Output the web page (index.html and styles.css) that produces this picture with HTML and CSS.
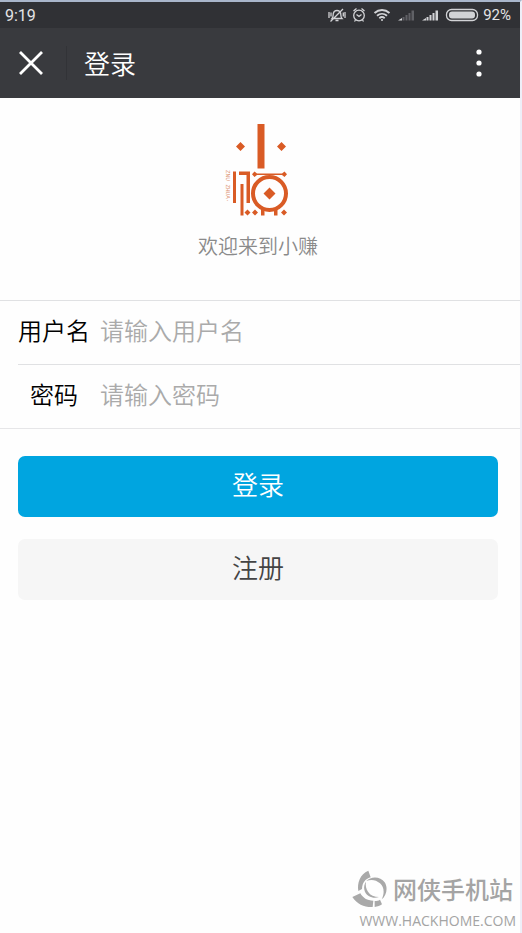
FILE: index.html
```
<!DOCTYPE html>
<html lang="zh-CN">
	<head>
		<meta charset="UTF-8">
		<meta name="viewport" content="width=device-width, initial-scale=1">
		<title>登录</title>
		<link rel="stylesheet" href="styles.css">
	</head>

	<body>
		<div class="page">
			<!-- status bar -->
			<div class="status">
				<span class="clock">9:19</span>
				<svg class="status-icons" width="152" height="18" viewBox="327 6 152 18" fill="none" stroke="#d2d3d6" stroke-width="1.3">
					<!-- muted bell -->
					<path d="M332 18.500c1.500-1.500 1-3 1.300-5 .4-2 1.700-3 3.700-3s3.300 1 3.700 3c.3 2-.2 3.500 1.300 5zM335.500 20.500h3M343 9l-12.500 12.500M329 12v6M345 12v6M331 12.500v4M343.300 12.500v4"/>
					<!-- alarm -->
					<circle cx="359" cy="15.500" r="5.300"/>
					<path d="M353.500 11l3-2.500M361.500 8.500l3 2.500M356.500 14.500l2.500 2 2.500-2M355.500 20l-1 1.500M362.500 20l1 1.500"/>
					<!-- wifi -->
					<path d="M374.500 13c4.500-4 10.500-4 15 0M377 15.800c3-2.600 7-2.600 10 0M379.300 18.200c1.700-1.400 3.700-1.400 5.400 0" stroke-width="1.900"/>
					<circle cx="382" cy="20" r="1" fill="#d2d3d6" stroke="none"/>
					<!-- signal, two cards -->
					<g stroke="none" fill="#606166">
						<path fill="#d2d3d6" d="M398 20.500l4-2.500v2.500z"/>
						<path d="M402.500 17h2v3.500h-2zM405.500 15h2v5.500h-2zM408.500 13h2v7.500h-2zM411.500 10.500h2.500v10h-2.500z"/>
						<path fill="#d2d3d6" d="M422 20.500l4-2.500v2.500zM426.500 17h2v3.500h-2zM429.500 15h2v5.500h-2zM432.500 13h2v7.500h-2zM435.500 10.500h2.500v10h-2.500z"/>
					</g>
					<!-- battery -->
					<rect x="446.500" y="9.500" width="31" height="11" rx="5"/>
					<rect x="449" y="11.500" width="26" height="7" rx="3" fill="#d2d3d6" stroke="none"/>
				</svg>
				<span class="percent">92%</span>
			</div>

			<header class="bar">
				<button type="button" class="icon-btn close" aria-label="关闭">
					<svg width="24" height="24" viewBox="0 0 24 24" stroke="#fff" stroke-width="2.800"><path d="M1 1l22 22M23 1L1 23"/></svg>
				</button>
				<h1 class="title">登录</h1>
				<button type="button" class="icon-btn more" aria-label="更多">
					<svg width="6" height="28" viewBox="0 0 6 28" fill="#fff"><circle cx="3" cy="3" r="2.600"/><circle cx="3" cy="14" r="2.600"/><circle cx="3" cy="25" r="2.600"/></svg>
				</button>
			</header>

			<main>
				<div class="brand">
					<svg class="logo" width="66" height="94" viewBox="224 123 66 94" fill="#d95b25">
						<path d="M257.500 124h7v44.500h-7zM240.500 142l4.500 4.500-4.500 4.500-4.500-4.500zM281.500 142l4.500 4.500-4.500 4.500-4.500-4.500z"/>
						<path d="M233 171.500h3V203h-3zM240.500 184h3v31.500h-3zM239 171.500h11V203h-3.500v-28H239z"/>
						<path d="M254.500 171.500l2.500 2h25l2.500-2 2.500 2.700-2.500 2.700-2.500-2h-25l-2.500 2-2.500-2.700z"/>
						<circle cx="269.500" cy="193.500" r="16.500" fill="none" stroke="#d95b25" stroke-width="4"/>
						<path d="M269.500 187.500l6 6-6 6-6-6zM261 209h3.500v6.500H261zM274 209h3.500v6.500H274z"/>
						<path d="M247.500 209.500l3 3-3 3-3-3zM255 209.500l3 3-3 3-3-3zM284 209.500l3 3-3 3-3-3z"/>
						<text class="logo-text" transform="translate(226 170) rotate(90)">ZNU ZHUA·</text>
					</svg>
					<p class="welcome">欢迎来到小赚</p>
				</div>

				<form>
					<div class="fields">
						<div class="field">
							<label for="user">用户名</label>
							<input type="text" id="user" placeholder="请输入用户名">
						</div>
						<div class="field">
							<label for="pass">密码</label>
							<input type="password" id="pass" placeholder="请输入密码">
						</div>
					</div>
					<div class="actions">
						<button type="submit" class="btn primary">登录</button>
						<button type="button" class="btn">注册</button>
					</div>
				</form>
			</main>

			<footer class="mark">
				<div class="mark-name">
					<svg width="35" height="38" viewBox="33 27 105 114" fill="#a9a9a9">
						<path d="M52 90C48 65 57 40 82 29l7 20C72 54 64 66 63 84z"/>
						<path d="M34 108l24-11c8 14 20 22 39 22l-2 19c-25 1-46-8-61-30z"/>
						<path d="M101 120c7 0 11-1 16-4l6 14c-6 5-13 7-22 8z"/>
						<path d="M76 60c14-15 43-14 55 4 11 17 5 40-9 51 9-18 8-36-5-48-12-11-27-13-41-7z"/>
						<path d="M75 62c-10 14-6 34 8 43 10 6 21 7 31 3-14 0-26-5-33-16-6-9-8-19-6-30z"/>
					</svg>
					<span>网侠手机站</span>
				</div>
				<div class="mark-url">WWW.HACKHOME.COM</div>
			</footer>
		</div>
	</body>
</html>
```
FILE: styles.css
```
* { box-sizing: border-box; }
body { margin: 0; font-family: "Noto Sans CJK SC", sans-serif; font-weight: 350; background: #fefefe; }
h1, p { margin: 0; font-weight: inherit; }
button, input { font: inherit; }

.page { display: flex; flex-direction: column; min-height: 100vh; border-top: 2px solid #a9b6cb; border-right: 2px solid #eeeff8; }

/* Status bar */
.status { display: flex; align-items: center; height: 26px; padding: 0 9px 0 5px; background: #303135; color: #e4e4e6; font-family: Roboto, sans-serif; font-weight: 400; }
.clock { flex: 1; font-size: 16px; }
.status-icons { margin-right: 4px; }
.percent { font-size: 15px; }

/* Title bar */
.bar { display: flex; align-items: center; height: 70px; background: #393a3e; color: #fff; }
.icon-btn { display: flex; padding: 0; border: none; background: none; cursor: pointer; }
.close { padding: 5px 23px 5px 19px; border-right: 1px solid #323337; }
.title { flex: 1; padding-left: 17px; font-size: 26px; line-height: 38px; }
.more { padding: 0 38px 0 16px; }

/* Logo */
.brand { display: flex; flex-direction: column; align-items: center; padding: 25px 4px 38px 0; }
.logo { margin-right: 2px; }
.logo-text { font: 6px "Liberation Mono", monospace; fill: #dc9272; }
.welcome { margin-top: 13px; font-size: 20px; line-height: 32px; color: #8a8a8a; }

/* Form */
.fields { border-top: 1px solid #e0e1e3; border-bottom: 1px solid #e6e6e8; }
.field { display: flex; align-items: center; height: 63px; margin-left: 18px; padding-bottom: 6px; }
.field + .field { height: 64px; border-top: 1px solid #e0e1e3; }
.field label { width: 72px; margin-right: 10px; font-size: 24px; text-align: center; color: #000; }
.field input { flex: 1; min-width: 0; padding: 0; border: none; outline: none; background: none; font-size: 24px; color: #000; }
.field input::placeholder { color: #aaa; opacity: 1; }

.actions { display: flex; flex-direction: column; gap: 22px; padding: 27px 22px 0 18px; }
.btn { height: 61px; padding: 0 0 7px; border: none; border-radius: 7px; background: #f6f6f6; color: #444; font-size: 26px; cursor: pointer; }
.primary { background: #00a5e0; color: #fff; }

/* Site mark */
.mark { align-self: flex-end; margin-top: auto; padding: 0 4px 2px 0; color: #a4a4a4; }
.mark-name { display: flex; align-items: center; gap: 6px; margin: 0 3px 3px 0; font-size: 24px; font-weight: 500; line-height: 38px; }
.mark-url { font: 500 14px/20px "Open Sans", sans-serif; text-align: right; }
```
